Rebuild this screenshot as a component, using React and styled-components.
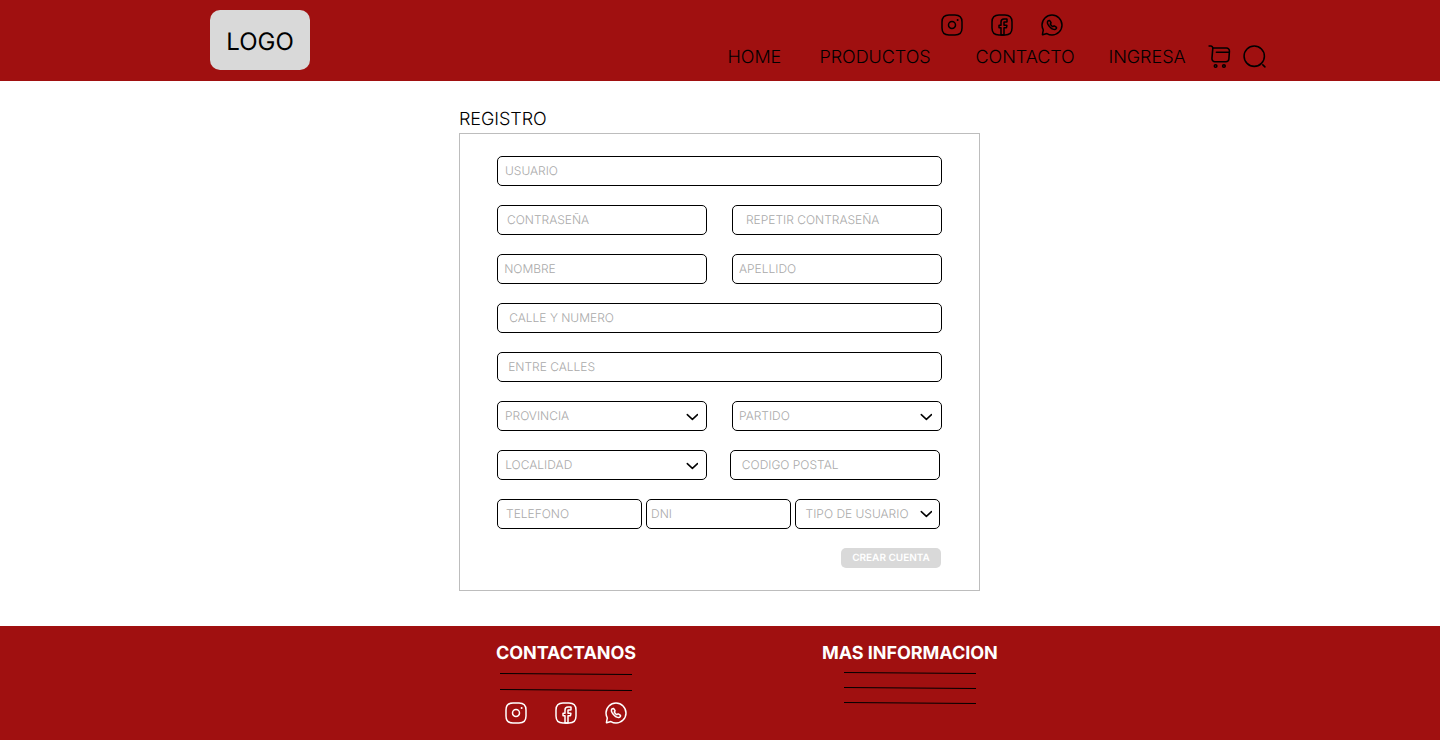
import React from "react";
import styled, { createGlobalStyle } from "styled-components";

const GlobalStyle = createGlobalStyle`
  *, *::before, *::after { box-sizing: border-box; }
  body {
    margin: 0;
    background: #ffffff;
    color: #000000;
    font-family: Inter, "Liberation Sans", sans-serif;
    text-rendering: geometricPrecision;
  }
`;

const Page = styled.div`
  display: flex;
  flex-direction: column;
  height: 740px;
  overflow: hidden;
`;

const Header = styled.header`
  display: flex;
  justify-content: space-between;
  height: 81px;
  padding: 10px 172px 0 210px;
  background: #a01010;
`;

const Logo = styled.div`
  display: flex;
  align-items: center;
  justify-content: center;
  width: 100px;
  height: 60px;
  padding-top: 2px;
  border-radius: 10px;
  background: #d9d9d9;
  font-size: 24px;
`;

const HeaderRight = styled.div`
  display: flex;
  flex-direction: column;
  width: 541px;
`;

const Social = styled.div`
  display: flex;
  gap: 26px;
  padding-left: ${(p) => p.$indent}px;
  margin-top: ${(p) => p.$top}px;
  color: ${(p) => p.$color};
`;

const Nav = styled.nav`
  display: flex;
  height: 26px;
  margin-top: 7px;
`;

const NavLink = styled.a`
  flex: none;
  width: ${(p) => p.$width}px;
  padding-left: 0.5px;
  font-size: 18px;
  font-weight: 300;
  line-height: 28px;
  letter-spacing: -0.05px;
  white-space: nowrap;
`;

const NavIcons = styled.div`
  display: flex;
  gap: 10px;
  height: 26px;
`;

const Main = styled.main`
  display: flex;
  flex-direction: column;
  flex: 1;
  width: 521px;
  margin-left: 459px;
  padding-top: 26px;
`;

const Title = styled.h1`
  margin: 0;
  height: 26px;
  font-size: 18px;
  font-weight: 300;
  line-height: 26px;
  letter-spacing: -0.05px;
`;

const Form = styled.form`
  display: flex;
  flex-direction: column;
  gap: 19px;
  height: 458px;
  padding: 22px 37px 0;
  border: 1px solid #bdbdbd;
`;

const Row = styled.div`
  display: flex;
  gap: ${(p) => p.$gap || 0}px;
`;

const Field = styled.label`
  display: flex;
  align-items: center;
  justify-content: space-between;
  flex: none;
  width: ${(p) => p.$width}px;
  height: 30px;
  padding: 0 ${(p) => p.$end || 8}px 0 ${(p) => p.$pad}px;
  border: 1px solid #000000;
  border-radius: 5px;
`;

const Input = styled.input`
  width: 100%;
  padding: 0;
  border: 0;
  outline: 0;
  background: transparent;
  font: 300 12px/28px Inter, "Liberation Sans", sans-serif;
  text-rendering: inherit;
  &::placeholder { color: #a9a9a9; opacity: 1; }
`;

const Choice = styled.span`
  color: #a9a9a9;
  font-size: 12px;
  font-weight: 300;
  line-height: 28px;
  white-space: nowrap;
`;

const Submit = styled.button`
  align-self: flex-end;
  width: 100px;
  height: 20px;
  margin-right: 1px;
  padding: 0 0 1px;
  border: 0;
  border-radius: 5px;
  background: #d9d9d9;
  color: #ffffff;
  font: 600 10px/18px Inter, "Liberation Sans", sans-serif;
  text-rendering: inherit;
`;

const Footer = styled.footer`
  display: flex;
  height: 114px;
  padding: 15px 0 0 496px;
  background: #a01010;
`;

const FooterColumn = styled.section`
  width: ${(p) => p.$width}px;
`;

const FooterTitle = styled.h2`
  margin: 0;
  height: 24px;
  color: #ffffff;
  font-size: 18px;
  font-weight: 700;
  line-height: 26px;
  letter-spacing: -0.05px;
  white-space: nowrap;
`;

const Strokes = styled.svg`
  display: block;
  margin-left: ${(p) => p.$left}px;
`;

const IconSvg = styled.svg`
  display: block;
  flex: none;
  fill: none;
  stroke: currentColor;
  stroke-width: 1.5;
  stroke-linecap: round;
  stroke-linejoin: round;
`;

const ChevronSvg = styled(IconSvg)`
  margin-top: ${(p) => p.$drop}px;
`;

const Dot = styled.path`
  stroke-width: 2;
`;

const Icon = ({ size = 24, children }) => (
  <IconSvg width={size} height={size} viewBox="0 0 24 24">{children}</IconSvg>
);

const Frame = () => <path d="M9 22h6c5 0 7-2 7-7V9c0-5-2-7-7-7H9C4 2 2 4 2 9v6c0 5 2 7 7 7z" />;

const SocialIcons = (props) => (
  <Social {...props}>
    <Icon>
      <Frame />
      <path d="M12 15.5a3.5 3.5 0 100-7 3.5 3.5 0 000 7z" />
      <Dot d="M17.6 7h.01" />
    </Icon>
    <Icon>
      <Frame />
      <path d="M14 9.3v2.9h2.6c.2 0 .3.2.3.4l-.4 1.9c0 .1-.2.2-.3.2H14V22h-3v-7.2H9.3c-.2 0-.3-.1-.3-.3v-1.9c0-.2.1-.3.3-.3H11V9c0-1.7 1.3-3 3-3h2.7c.2 0 .3.1.3.3v2.4c0 .2-.1.3-.3.3h-2.4c-.2 0-.3.1-.3.3z" />
    </Icon>
    <Icon>
      <path d="M6.9 20.6c1.5.9 3.3 1.4 5.1 1.4 5.5 0 10-4.5 10-10S17.5 2 12 2 2 6.5 2 12c0 1.8.5 3.5 1.3 5L2.44 21.306c-.06.25.1.4.35.35z" />
      <path d="M16.5 14.848c0 .162-.036.329-.113.491-.077.162-.177.315-.309.459-.223.243-.468.419-.746.532-.273.113-.568.171-.886.171-.464 0-.96-.108-1.482-.329a7.983 7.983 0 01-1.56-.892 13.03 13.03 0 01-1.486-1.257 12.9 12.9 0 01-1.263-1.475 7.972 7.972 0 01-.891-1.535c-.219-.518-.328-1.013-.328-1.485 0-.31.055-.607.164-.881.11-.28.282-.536.523-.766.291-.284.61-.424.947-.424.127 0 .254.027.368.08.118.054.223.135.305.252l1.055 1.472c.081.112.14.216.182.315.04.094.064.189.064.274a.64.64 0 01-.1.334 1.602 1.602 0 01-.264.333l-.345.356a.24.24 0 00-.073.18c0 .036.005.067.014.103.013.036.027.063.036.09.082.149.223.342.423.576.205.234.423.472.66.711.244.239.481.459.717.662.236.198.432.333.586.414.023.01.05.023.082.036a.285.285 0 00.109.018c.077 0 .136-.027.186-.077l.346-.337c.113-.113.222-.198.327-.252a.61.61 0 01.332-.1c.086 0 .177.018.277.059.1.04.204.099.318.175l1.49 1.045c.117.081.199.176.249.284.045.108.072.216.072.338z" />
    </Icon>
  </Social>
);

const Chevron = ({ drop }) => (
  <ChevronSvg $drop={drop} width="12" height="8" viewBox="0 0 12 8">
    <path d="M1.3 1.6L6.4 6.4l5.1-4.8" />
  </ChevronSvg>
);

const TextField = ({ width, pad, label }) => (
  <Field $width={width} $pad={pad}>
    <Input placeholder={label} aria-label={label} />
  </Field>
);

const SelectField = ({ width, pad, end, drop = 2, label }) => (
  <Field $width={width} $pad={pad} $end={end}>
    <Choice>{label}</Choice>
    <Chevron drop={drop} />
  </Field>
);

const FooterLines = ({ left, height, lines }) => (
  <Strokes $left={left} width="132" height={height}>
    {lines.map((y) => (
      <line key={y} x1="0" y1={y} x2="132" y2={y + 1} stroke="#000000" />
    ))}
  </Strokes>
);

export default function App() {
  return (
    <Page>
      <GlobalStyle />
      <Header>
        <Logo>LOGO</Logo>
        <HeaderRight>
          <SocialIcons $indent={213} $top={3} $color="#000000" />
          <Nav>
            <NavLink $width={92}>HOME</NavLink>
            <NavLink $width={156}>PRODUCTOS</NavLink>
            <NavLink $width={133}>CONTACTO</NavLink>
            <NavLink $width={99}>INGRESA</NavLink>
            <NavIcons>
              <Icon size={25}>
                <path d="M2 2h1.74c1.08 0 1.93.93 1.84 2l-.83 9.96a2.796 2.796 0 002.79 3.03h10.65c1.44 0 2.7-1.18 2.81-2.61l.54-7.5c.12-1.66-1.14-3.01-2.81-3.01H5.82" />
                <path d="M16.25 22.4a1.25 1.25 0 100-2.5 1.25 1.25 0 000 2.5zM8.25 22.4a1.25 1.25 0 100-2.5 1.25 1.25 0 000 2.5zM9 8h12" />
              </Icon>
              <Icon size={25}>
                <path d="M11.75 21.5a9.75 9.75 0 100-19.5 9.75 9.75 0 000 19.5zM22 22l-2-2" />
              </Icon>
            </NavIcons>
          </Nav>
        </HeaderRight>
      </Header>
      <Main>
        <Title>REGISTRO</Title>
        <Form>
          <TextField width={445} pad={7} label="USUARIO" />
          <Row $gap={25}>
            <TextField width={210} pad={9} label="CONTRASEÑA" />
            <TextField width={210} pad={13} label="REPETIR CONTRASEÑA" />
          </Row>
          <Row $gap={25}>
            <TextField width={210} pad={6.2} label="NOMBRE" />
            <TextField width={210} pad={6} label="APELLIDO" />
          </Row>
          <TextField width={445} pad={11.2} label="CALLE Y NUMERO" />
          <TextField width={445} pad={10.2} label="ENTRE CALLES" />
          <Row $gap={25}>
            <SelectField width={210} pad={7} end={8} label="PROVINCIA" />
            <SelectField width={210} pad={6} end={9} label="PARTIDO" />
          </Row>
          <Row $gap={23}>
            <SelectField width={210} pad={7.2} end={8} label="LOCALIDAD" />
            <TextField width={210} pad={10.8} label="CODIGO POSTAL" />
          </Row>
          <Row $gap={4}>
            <TextField width={145} pad={8} label="TELEFONO" />
            <TextField width={145} pad={4} label="DNI" />
            <SelectField width={145} pad={9.6} end={7} drop={0} label="TIPO DE USUARIO" />
          </Row>
          <Submit type="button">CREAR CUENTA</Submit>
        </Form>
      </Main>
      <Footer>
        <FooterColumn $width={326}>
          <FooterTitle>CONTACTANOS</FooterTitle>
          <FooterLines left={4} height={35} lines={[8.5, 24.5]} />
          <SocialIcons $indent={8} $top={1} $color="#ffffff" />
        </FooterColumn>
        <FooterColumn $width={180}>
          <FooterTitle>MAS INFORMACION</FooterTitle>
          <FooterLines left={22} height={48} lines={[7.5, 22.5, 37.5]} />
        </FooterColumn>
      </Footer>
    </Page>
  );
}
